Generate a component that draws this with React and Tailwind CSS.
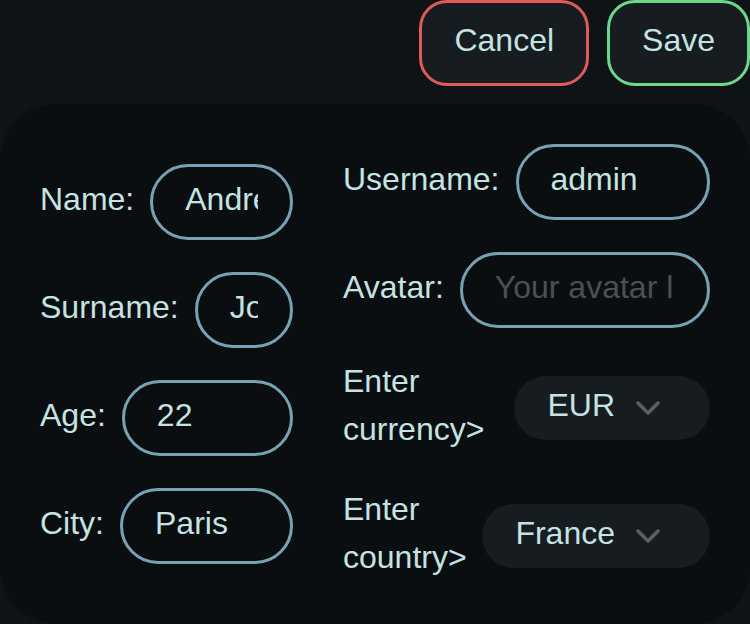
import { useState } from "react";

const Chevron = () => (
  <svg width="24" height="14" viewBox="0 0 24 14" className="shrink-0">
    <polyline
      points="2,2 12,12 22,2"
      fill="none"
      stroke="#5d6062"
      strokeWidth="3.5"
      strokeLinecap="round"
      strokeLinejoin="round"
    />
  </svg>
);

const TextField = ({ label, value, placeholder }) => {
  return (
    <div className="flex items-center gap-4">
      <span className="shrink-0 -translate-y-[3px]">{label}</span>
      <input
        className="h-[76px] w-full min-w-0 flex-1 rounded-full border-[3px] border-[#76a2b4] bg-transparent px-8 pb-[6px] text-[#c4e3e2] outline-none placeholder:text-[#4b5053]"
        defaultValue={value}
        placeholder={placeholder}
      />
    </div>
  );
};

const SelectField = ({ label, value }) => {
  return (
    <div className="flex items-center gap-4">
      <span className="min-w-0 flex-1 -translate-y-[3px]">{label}</span>
      <div className="flex h-16 shrink-0 items-center gap-[21px] rounded-full bg-[#161c1f] pl-[33px] pr-[50px]">
        <span className="-translate-y-[3px]">{value}</span>
        <Chevron />
      </div>
    </div>
  );
};

const App = () => {
  const [saved, setSaved] = useState(false);

  return (
    <div
      className="min-h-[624px] w-[750px] overflow-hidden bg-[#0e1316] text-[32px] leading-[48px] text-[#c4e3e2]"
      style={{ fontFamily: '"Liberation Sans", Arial, sans-serif' }}
    >
      {/* Actions */}
      <div className="mb-[18px] flex justify-end gap-[18px]">
        <button className="rounded-[28px] border-[3px] border-[#e05a5a] bg-[#161c1f] px-8 pb-[19px] pt-[13px]">
          Cancel
        </button>
        <button
          className="rounded-[28px] border-[3px] border-[#6bd88a] bg-[#161c1f] px-8 pb-[19px] pt-[13px]"
          onClick={() => setSaved(!saved)}
        >
          Save
        </button>
      </div>

      {/* Profile form */}
      <div className="flex items-center justify-between rounded-[56px] bg-[#0a0e11] px-10 py-10">
        <div className="flex w-[253px] flex-col gap-8">
          <TextField label="Name:" value="Andrew" />
          <TextField label="Surname:" value="Johnson" />
          <TextField label="Age:" value="22" />
          <TextField label="City:" value="Paris" />
        </div>

        <div className="flex w-[367px] flex-col gap-8">
          <TextField label="Username:" value="admin" />
          <TextField label="Avatar:" placeholder="Your avatar link" />
          <SelectField label="Enter currency>" value="EUR" />
          <SelectField label="Enter country>" value="France" />
        </div>
      </div>
    </div>
  );
};

export default App;
